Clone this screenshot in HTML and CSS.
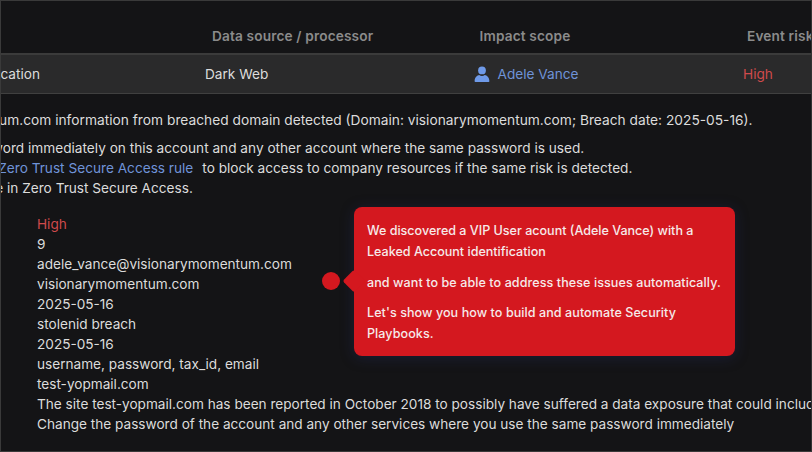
FILE: index.html
```html
<!DOCTYPE html>
<html lang="en">
<head>
<meta charset="utf-8">
<title>Event details</title>
<link rel="stylesheet" href="styles.css">
</head>
<body>
<main class="frame">
  <div class="head grid">
    <div class="col-type"></div>
    <div class="col-source head-source">Data source / processor</div>
    <div class="col-scope">Impact scope</div>
    <div class="col-risk head-risk">Event risk level</div>
  </div>
  <div class="row grid">
    <div class="col-type cell-type">Leaked Account identification</div>
    <div class="col-source">Dark Web</div>
    <div class="col-scope scope">
      <svg class="user" viewBox="0 0 16 16" aria-hidden="true"><circle cx="8" cy="4.400" r="3.900"/><path d="M.6 15.200c0-4 2.800-6 4.600-6.200.8.700 1.800 1 2.800 1s2-.3 2.800-1c1.800.2 4.600 2.200 4.600 6.200 0 .5-.3.8-.8.8H1.400c-.5 0-.8-.3-.8-.8z"/></svg>
      <span class="link">Adele Vance</span>
    </div>
    <div class="col-risk high cell-risk">High</div>
  </div>
  <section class="summary">
    <p class="line-a">Leaked visionarymomentum.com information from breached domain detected (Domain: visionarymomentum.com; Breach date: 2025-05-16).</p>
    <div class="advice">
      <p class="reset">Reset the password immediately on this account and any other account where the same password is used.</p>
      <p class="create">Create a <span class="link">Zero Trust Secure Access rule</span><span class="after-link">to block access to company resources if the same risk is detected.</span></p>
      <p class="enable">Enable the rule in Zero Trust Secure Access.</p>
    </div>
  </section>
  <section class="details">
    <p class="high">High</p>
    <p>9</p>
    <p>adele_vance@visionarymomentum.com</p>
    <p>visionarymomentum.com</p>
    <p>2025-05-16</p>
    <p>stolenid breach</p>
    <p>2025-05-16</p>
    <p>username, password, tax_id, email</p>
    <p>test-yopmail.com</p>
    <p>The site test-yopmail.com has been reported in October 2018 to possibly have suffered a data exposure that could include personal data</p>
    <p>Change the password of the account and any other services where you use the same password immediately</p>
  </section>
  <span class="dot"></span>
  <aside class="tip">
    <p class="tip-first">We discovered a VIP User acount (Adele Vance) with a Leaked Account identification</p>
    <p class="tip-mid">and want to be able to address these issues automatically.</p>
    <p class="tip-last">Let's show you how to build and automate Security Playbooks.</p>
  </aside>
</main>
</body>
</html>
```
FILE: styles.css
```css
* { box-sizing: border-box; }
html, body { margin: 0; height: 100%; }
body {
  background: #141416;
  color: #dcdcdc;
  font: 13.65px/20px Inter, "Liberation Sans", sans-serif;
  overflow: hidden;
}
p { margin: 0; white-space: nowrap; }
.frame {
  position: relative;
  width: 812px;
  height: 452px;
  overflow: hidden;
  border: 1px solid #3a3a3a;
  border-right-color: #333;
  background: #141416;
}
.grid {
  display: grid;
  grid-template-columns: 205px 201px 240px 200px;
  margin-left: -1px;
  white-space: nowrap;
}
.head {
  height: 54px;
  padding-top: 27px;
  color: #8b8b8b;
  font-weight: 600;
  line-height: 16px;
  letter-spacing: .15px;
  border-bottom: 2px solid #3b3b3b;
}
.head-source { padding-left: 7px; }
.head-risk { padding-left: 101px; }
.row {
  height: 39px;
  align-items: center;
  background: #2a2a2b;
  border-bottom: 1px solid #404040;
}
.col-scope { display: flex; justify-content: center; align-items: center; gap: 8px; }
.head .col-scope { align-items: flex-start; padding-right: 2px; }
.cell-risk { padding-left: 97px; }
.cell-type { direction: rtl; overflow: hidden; text-align: left; width: 40px; }
.user { width: 16px; height: 16px; fill: #6f9ae8; }
.link { color: #6f93d8; }
.high { color: #cf4a4c; }
.summary { padding-top: 16px; }
.line-a { margin-left: -165px; font-size: 13.75px; }
.advice { margin-top: 8px; }
.reset { margin-left: -104px; }
.create { margin-left: -61px; }
.enable { margin-left: -94px; }
.after-link { margin-left: 9px; }
.details { margin-top: 16px; padding-left: 36px; font-size: 13.62px; }
.dot {
  position: absolute;
  left: 320.500px;
  top: 271px;
  width: 18px;
  height: 18px;
  border-radius: 50%;
  background: #d4181f;
}
.tip {
  position: absolute;
  left: 353px;
  top: 206px;
  width: 381px;
  height: 149px;
  padding: 13px 13px 0;
  border-radius: 8px;
  background: #d4181f;
  color: #f6eaea;
  font-size: 12.55px;
  font-weight: 500;
  line-height: 21px;
  box-shadow: 0 2px 14px rgba(40, 50, 110, .35);
}
.tip::before {
  content: "";
  position: absolute;
  left: -8px;
  top: 66px;
  width: 16px;
  height: 16px;
  transform: rotate(45deg);
  border-radius: 2px;
  background: #d4181f;
}
.tip p { position: relative; white-space: normal; }
.tip-first { margin-bottom: 10px; }
.tip-mid { margin-bottom: 9px; letter-spacing: .08px; }
.tip-last { letter-spacing: .07px; }
```
